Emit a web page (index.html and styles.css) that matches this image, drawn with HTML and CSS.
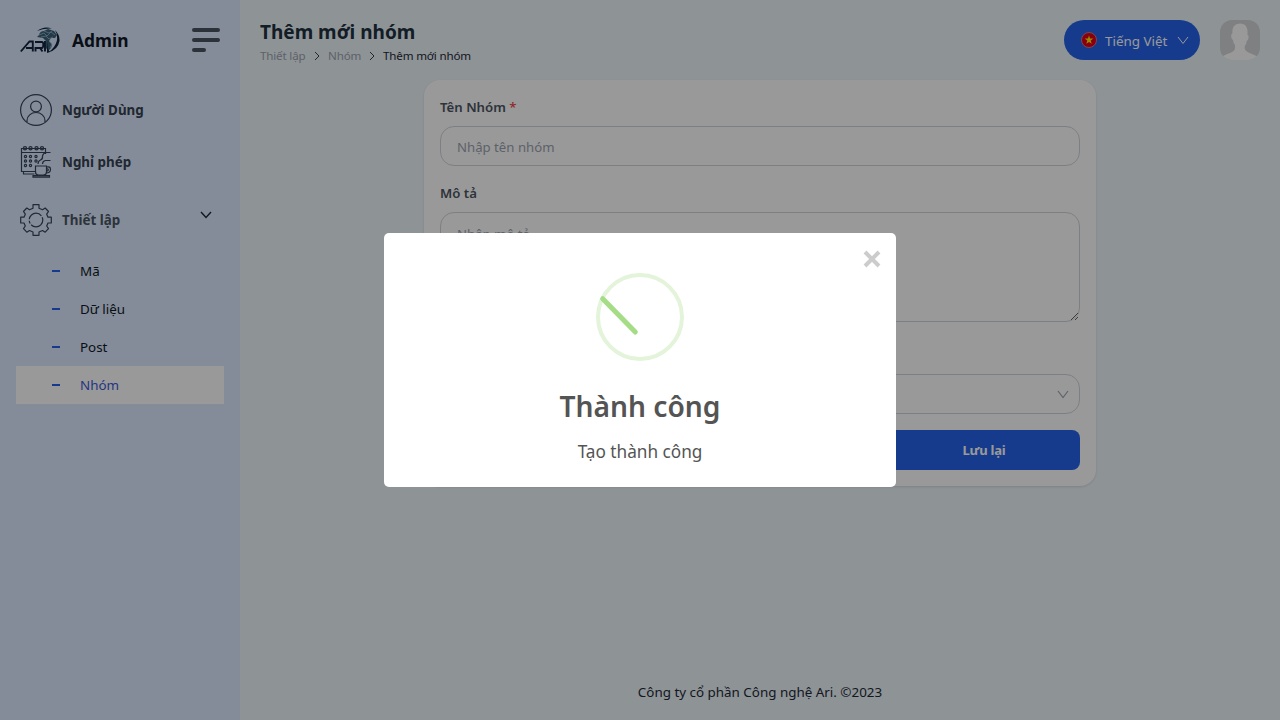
FILE: index.html
```html
<!DOCTYPE html>
<html lang="vi">
<head>
<meta charset="utf-8">
<title>Thêm mới nhóm</title>
<link rel="stylesheet" href="styles.css">
</head>
<body>
<div class="app">
  <aside class="sidebar">
    <div class="brand">
      <svg class="logo" width="40" height="28" viewBox="0 0 40 28">
        <g fill="none" stroke="#12263f" stroke-width="1.900">
          <path d="M.8 25.500 9.500 15.500h3.300v10M6 22h7M15.500 25.500V22h6.500q1.300-.3 1.300-3.200t-1.500-2.800H15M20 22l2.500 3.500M25 15v10.500"/>
        </g>
        <path d="M19 9q1-4 5-4l4-2 6 2 3 4-2 3-4 0-2 3 3 4-1 3-3 3-2-3V15l-3-3-6-1z" fill="#3e6177"/>
        <path d="M19 9l5-2 3 3 4-4 4 3M21 11l5-1 3 3 4-2M29 15l3 3-2 4M24 5l5 2 3-2" fill="none" stroke="#8fb9d0" stroke-width=".8"/>
        <path d="M17 5q7-5.500 15-2.500Q23 2 17 5M35 4q5 5 4.500 11-1.500 9-11.500 11.500 7-4.500 8.800-11.500Q38 9 35 4M27 15l1 8 2 3-3 1z" fill="#12263f"/>
      </svg>
      <span class="brand-name">Admin</span>
      <span class="burger"><i></i><i></i><i class="short"></i></span>
    </div>
    <nav class="menu">
      <a class="menu-item">
        <svg width="32" height="32" viewBox="0 0 32 32" class="line"><circle cx="16" cy="16" r="15.400"/><circle cx="16" cy="12.500" r="5.400"/><path d="M7 28v-1.500a9 8 0 0 1 18 0V28"/></svg>
        <span>Người Dùng</span>
      </a>
      <a class="menu-item">
        <svg width="32" height="32" viewBox="0 0 32 32" class="line"><path d="M25.500 8V2.500H1.500V25.500H15M1.500 6.500h24M3.500 26v2h11"/><g><circle cx="5" cy="2.300" r="1.600"/><circle cx="10.500" cy="2.300" r="1.600"/><circle cx="16.500" cy="2.300" r="1.600"/><circle cx="22" cy="2.300" r="1.600"/></g><g><circle cx="5.500" cy="10.500" r="1.100"/><circle cx="10.500" cy="10.500" r="1.100"/><circle cx="16" cy="10.500" r="1.100"/><circle cx="5.500" cy="15" r="1.100"/><circle cx="10.500" cy="15" r="1.100"/><circle cx="16" cy="15" r="1.100"/><circle cx="5.500" cy="19.500" r="1.100"/><circle cx="10.500" cy="19.500" r="1.100"/></g><path d="M15.500 20h11v6q0 3-3 3h-5q-3 0-3-3zM26.500 21q4-1 4 2.500t-4.500 3.500M26.500 23q1.800-.5 1.800.8t-1.800 1.200M13 29.700h16.500v1.500H13zM18 18q0-3 2.500-4t2-4q.5-3 4-3.500h4M22.500 18q0-3 3-3.500h5"/></svg>
        <span>Nghỉ phép</span>
      </a>
      <a class="menu-item parent">
        <svg width="32" height="32" viewBox="0 0 32 32" class="line gear"><path d="M13 .7h6v3.500l3.500 1.500 2.700-1.700 3.300 3.500-1.800 2.700 1.300 3h3.300v5.800h-3.300l-1.300 3 1.800 2.700-3.300 3.500-2.700-1.700-3.500 1.500v3.300h-6V28l-3.500-1.500-2.700 1.700-3.300-3.500L5.300 22 4 19H.7v-5.800H4l1.300-3-1.800-2.700L6.800 4l2.700 1.700L13 4.200z"/><circle cx="16" cy="16" r="6.800" stroke-dasharray="16 1.500 3 1.500"/></svg>
        <span>Thiết lập</span>
        <svg class="caret" width="12" height="8" viewBox="0 0 12 8"><path d="M1 1l5 5.500L11 1"/></svg>
      </a>
      <ul class="submenu">
        <li><i></i>Mã</li>
        <li><i></i>Dữ liệu</li>
        <li><i></i>Post</li>
        <li class="active"><i></i>Nhóm</li>
      </ul>
    </nav>
  </aside>
  <main class="main">
    <header class="header">
      <div class="heading">
        <h1>Thêm mới nhóm</h1>
        <div class="crumbs">
          <span class="c1">Thiết lập</span>
          <svg width="6" height="10" viewBox="0 0 6 10"><path d="M1 1l4 4-4 4"/></svg>
          <span class="c2">Nhóm</span>
          <svg width="6" height="10" viewBox="0 0 6 10"><path d="M1 1l4 4-4 4"/></svg>
          <span class="c3">Thêm mới nhóm</span>
        </div>
      </div>
      <div class="tools">
        <button class="language">
          <svg width="16" height="16" viewBox="0 0 16 16"><circle cx="8" cy="8" r="7.500" fill="#e3001b" stroke="#d88" stroke-width=".8"/><path d="M8 3.500l1.050 3.100h3.300L9.700 8.600l1 3.200L8 9.900l-2.700 1.900 1-3.200-2.650-2h3.300z" fill="#ffe600"/></svg>
          <span>Tiếng Việt</span>
          <svg class="pill-caret" width="12" height="9" viewBox="0 0 12 9"><path d="M1 1l5 6.500L11 1"/></svg>
        </button>
        <svg class="avatar" width="40" height="40" viewBox="0 0 40 40"><rect width="40" height="40" fill="#d4d6d8"/><path d="M2 40v-3q2-2 8-4 5-2 5-5v-3q-2-2-2-5-2-1-1.800-5 .2-1 1-1Q11.500 3.500 20 3.500T27.500 15q1 0 1 1 .3 4-1.800 5 0 3-2 5v2q0 3 5 5t8.500 4v3z" fill="#fff"/></svg>
      </div>
    </header>
    <form class="card">
      <label class="name-label">Tên Nhóm <b>*</b></label>
      <input class="field" type="text" placeholder="Nhập tên nhóm">
      <label class="desc-label">Mô tả</label>
      <textarea class="field area" placeholder="Nhập mô tả"></textarea>
      <div class="select field"><svg width="12" height="9" viewBox="0 0 12 9"><path d="M1 1l5 6.500L11 1"/></svg></div>
      <div class="actions"><button type="button" class="save"><span>Lưu lại</span></button></div>
    </form>
    <footer class="footer"><span>Công ty cổ phần Công nghệ Ari. ©2023</span></footer>
  </main>
</div>
<div class="backdrop">
  <section class="dialog">
    <svg class="close" width="18" height="18" viewBox="0 0 18 18"><path d="M2 2l14 14M16 2l-14 14"/></svg>
    <svg class="success" width="88" height="88" viewBox="0 0 88 88"><circle cx="44" cy="44" r="42"/><path d="M6.700 25.700L39.300 59"/></svg>
    <h2><span>Thành công</span></h2>
    <p><span>Tạo thành công</span></p>
  </section>
</div>
</body>
</html>
```

FILE: styles.css
```css
* { box-sizing: border-box; }
body { margin: 0; font-family: "Noto Sans", "Open Sans", sans-serif; font-size: 13.4px; line-height: 20px; color: #111827; overflow: hidden; }
h1, h2, p, ul { margin: 0; padding: 0; }
button, input, textarea { font: inherit; }
.app { display: flex; width: 1280px; height: 720px; background: #edf6fb; }
.sidebar { width: 240px; background: #dbeafe; }
.brand { display: flex; align-items: center; height: 80px; padding: 0 20px; }
.logo { margin-right: 12px; }
.brand-name { font-size: 17.4px; font-weight: 700; }
.burger { display: flex; flex-direction: column; gap: 6px; width: 28px; margin-left: auto; }
.burger i { height: 4px; border-radius: 2px; background: #485460; }
.burger .short { width: 14px; }
.menu { padding-top: 4px; }
.menu-item { display: flex; align-items: center; height: 52px; padding: 0 20px; gap: 10px; font-weight: 700; color: #374151; }
.menu-item.parent { height: 64px; color: #4b5563; }
.line { fill: none; stroke: #37435a; stroke-width: 1.2; }
.gear { stroke-linejoin: round; }
.caret { margin: 0 8px 10px auto; fill: none; stroke: #1f2937; stroke-width: 1.4; }
.submenu { list-style: none; margin: 0 16px; }
.submenu li { display: flex; align-items: center; height: 38px; padding-left: 36px; }
.submenu i { width: 8px; height: 2px; margin-right: 20px; background: #2563eb; }
.submenu .active { background: #fff; color: #3b5bdb; }
.main { flex: 1; display: flex; flex-direction: column; }
.header { display: flex; justify-content: space-between; height: 80px; padding: 20px; }
h1 { font-size: 19px; line-height: 24px; font-weight: 700; color: #1f3140; }
.crumbs { display: flex; align-items: center; height: 24px; font-size: 11.6px; letter-spacing: -.17px; color: #9ca3af; }
.crumbs svg { margin: 0 8px; fill: none; stroke: #374151; stroke-width: 1; }
.c1 { width: 46px; white-space: nowrap; }
.c2 { width: 33px; white-space: nowrap; }
.c3 { color: #1f2937; }
.tools { display: flex; gap: 20px; }
.language { display: flex; align-items: center; width: 136px; height: 40px; border: 0; border-radius: 20px; padding: 0 11px 0 17px; background: #2563eb; color: #fff; white-space: nowrap; }
.language span { margin-left: 8px; padding-top: 2px; }
.pill-caret { margin-left: auto; fill: none; stroke: #fff; stroke-width: 1; }
.avatar { border-radius: 12px; }
.card { display: flex; flex-direction: column; width: 672px; height: 406px; margin: 0 auto; padding: 16px; border-radius: 16px; background: #fff; box-shadow: 0 1px 3px rgba(0,0,0,.12); }
label { height: 30px; padding-top: 1px; font-weight: 600; color: #4b5563; font-size: 13.2px; }
label b { color: #ef4444; font-weight: 500; }
.field { display: block; width: 100%; height: 40px; padding: 1px 16px 0; border: 1px solid #d1d5db; border-radius: 14px; background: #fff; outline: 0; }
.field::placeholder { color: #9ca3af; font-size: 13.2px; opacity: 1; }
.desc-label { margin-top: 16px; }
.area { height: 110px; padding-top: 11px; resize: vertical; flex: none; }
.select { display: flex; align-items: center; justify-content: flex-end; margin-top: 52px; padding: 0 10px; }
.select svg { fill: none; stroke: #9ca3af; stroke-width: 1.2; }
.actions { display: flex; justify-content: flex-end; margin-top: 16px; }
.save { width: 192px; height: 40px; border: 0; border-radius: 8px; background: #2563eb; color: #fff; font-size: 13px; font-weight: 700; letter-spacing: -.2px; }
.footer { margin-top: auto; height: 38px; text-align: center; color: #1f2937; }
.backdrop { position: fixed; inset: 0; display: flex; align-items: center; justify-content: center; background: rgba(0,0,0,.4); }
.dialog { position: relative; display: flex; flex-direction: column; align-items: center; width: 512px; height: 254px; padding-top: 40px; border-radius: 5px; background: #fff; color: #545454; }
.close { position: absolute; right: 15px; top: 17px; fill: none; stroke: #ccc; stroke-width: 4; }
.success { fill: none; stroke: #e3f4da; stroke-width: 4; }
.success path { stroke: #a5dc86; stroke-width: 5; stroke-linecap: round; }
h2 { margin-top: 25px; font-size: 28.2px; line-height: 40px; font-weight: 600; }
p { margin-top: 14px; font-size: 17.2px; line-height: 24px; }
```
